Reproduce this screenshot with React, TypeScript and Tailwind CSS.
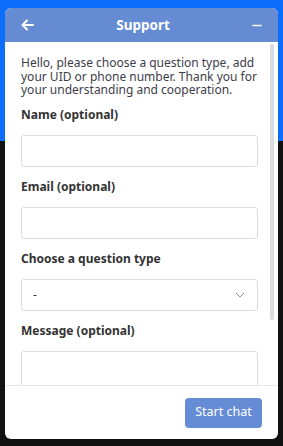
import React from 'react';

const fields = [
  { label: 'Name (optional)', kind: 'input' },
  { label: 'Email (optional)', kind: 'input' },
  { label: 'Choose a question type', kind: 'select' },
  { label: 'Message (optional)', kind: 'textarea' },
];

const App: React.FC = () => {
  return (
    <div
      className="w-[283px] h-[446px] overflow-hidden bg-[linear-gradient(#0d6efd_0,#0d6efd_141px,#121212_141px)] pt-[8px] px-[5px]"
      style={{ fontFamily: '"Noto Sans", "Open Sans", sans-serif' }}
    >
      <div className="w-[273px] h-[431px] bg-white rounded-[6px] flex flex-col overflow-hidden">
        {/* Header */}
        <div className="h-[34px] shrink-0 bg-[#658bd3] flex items-center justify-between px-[16px] text-white">
          <svg width="13" height="12" viewBox="0 0 13 12" fill="none" stroke="white" strokeWidth="2" strokeLinecap="round" strokeLinejoin="round">
            <path d="M12 6H1.5M6 1.5 1.5 6 6 10.5" />
          </svg>
          <span className="text-[13.5px] font-bold">Support</span>
          <svg width="10" height="12" viewBox="0 0 10 12" fill="none" stroke="white" strokeWidth="1.6">
            <path d="M0.5 6.5h9" />
          </svg>
        </div>

        {/* Body */}
        <div className="relative flex-1 overflow-hidden">
          <div className="pt-[14px] pl-[16px] pr-[20px]">
            <p className="text-[12px] leading-[13.5px] text-[#3d3d4a] mb-[8px]">
              Hello, please choose a question type, add your UID or phone number. Thank you for your understanding and cooperation.
            </p>
            {fields.map((f) => (
              <div key={f.label}>
                <div className="h-[20px] leading-[20px] text-[12px] font-bold text-[#333] mb-[10px]">{f.label}</div>
                {f.kind === 'input' && (
                  <div className="h-[32px] border border-[#dcdcdc] rounded-[3px] mb-[10px]" />
                )}
                {f.kind === 'select' && (
                  <div className="h-[32px] border border-[#dcdcdc] rounded-[3px] mb-[10px] flex items-center justify-between pl-[11px] pr-[12px] text-[12px] text-[#333]">
                    <span>-</span>
                    <svg width="10" height="6" viewBox="0 0 10 6" fill="none" stroke="#8a8a8a" strokeWidth="1">
                      <path d="M1 1l4 4 4-4" />
                    </svg>
                  </div>
                )}
                {f.kind === 'textarea' && (
                  <div className="h-[70px] border border-[#dcdcdc] rounded-[3px]" />
                )}
              </div>
            ))}
          </div>
          <div className="absolute right-[4px] top-[2px] w-[4px] h-[276px] rounded-full bg-[#d8dbdf]" />
        </div>

        {/* Footer */}
        <div className="h-[54px] shrink-0 border-t border-[#e6e6e6] flex items-center justify-end px-[16px]">
          <button className="w-[77px] h-[30px] rounded-[4px] bg-[#668cd6] text-white text-[12.5px]">Start chat</button>
        </div>
      </div>
    </div>
  );
};

export default App;
